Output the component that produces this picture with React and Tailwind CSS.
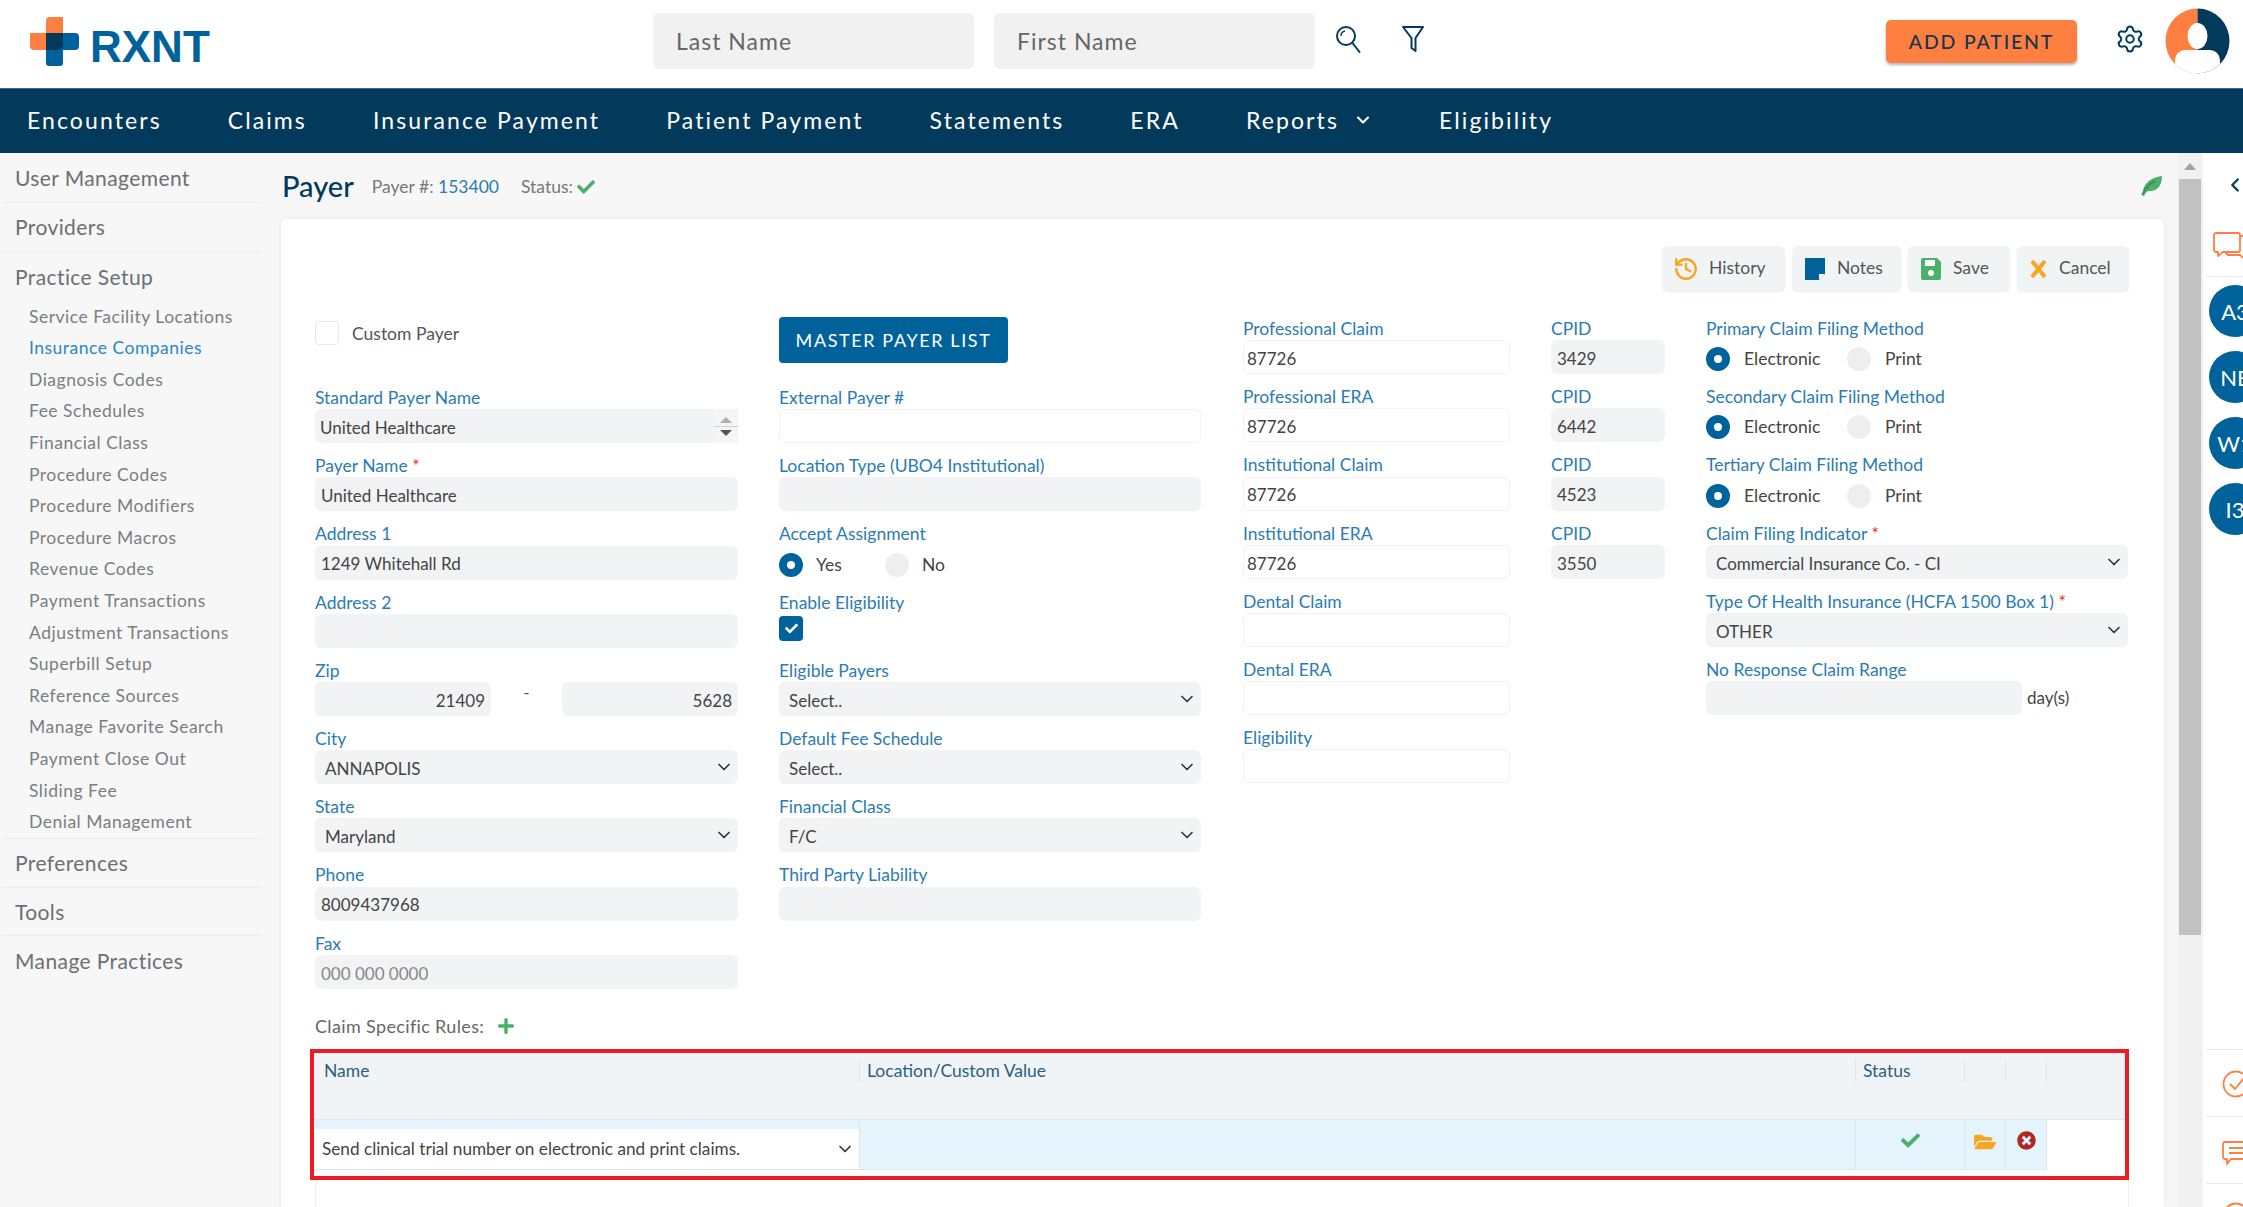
import { ChevronDown, ChevronLeft, History, Settings } from "lucide-react";
import { FaCheck, FaFolderOpen, FaPlus, FaTimesCircle } from "react-icons/fa";

const navItems = ["Encounters", "Claims", "Insurance Payment", "Patient Payment", "Statements", "ERA", "Reports", "Eligibility"];
const subItems = [
  "Service Facility Locations", "Insurance Companies", "Diagnosis Codes", "Fee Schedules", "Financial Class",
  "Procedure Codes", "Procedure Modifiers", "Procedure Macros", "Revenue Codes", "Payment Transactions",
  "Adjustment Transactions", "Superbill Setup", "Reference Sources", "Manage Favorite Search", "Payment Close Out",
  "Sliding Fee", "Denial Management",
];

const Field = ({ label, required, children }) => (
  <div className="h-[68.2px]">
    <div className="h-[23.25px] text-[17.5px] leading-[24px] text-[#2a7cb3] whitespace-nowrap">
      {label}
      {required && <span className="text-[#ed1c24]"> *</span>}
    </div>
    {children}
  </div>
);

const Input = ({ value, white, right, muted, className = "" }) => (
  <div className={`h-[34px] rounded-[6px] pt-[3px] flex items-center text-[17px] ${muted ? "text-[#888]" : "text-[#444]"} ${white ? "px-[3px] bg-white border border-[#f2f3f4]" : "px-[6px] bg-[#f1f3f4]"} ${right ? "justify-end" : ""} ${className}`}>
    {value}
  </div>
);

const Select = ({ value }) => (
  <div className="h-[34px] rounded-[6px] pl-[10px] pr-[4px] flex items-center justify-between text-[17px] text-[#444] bg-[#f1f3f4]">
    <span className="pt-[3px]">{value}</span>
    <ChevronDown size={20} className="text-[#333]" />
  </div>
);

const Radio = ({ on }) =>
  on ? (
    <span className="w-[24px] h-[24px] rounded-full border-[8px] border-[#00629b] bg-white" />
  ) : (
    <span className="w-[24px] h-[24px] rounded-full bg-[#eeeeee]" />
  );

const FilingMethod = ({ label }) => (
  <Field label={label}>
    <div className="flex items-center h-[34px] text-[17.5px] text-[#444] mt-[2px]">
      <Radio on />
      <span className="ml-[14px] w-[103px]">Electronic</span>
      <Radio />
      <span className="ml-[14px]">Print</span>
    </div>
  </Field>
);

const ToolButton = ({ icon, label, width }) => (
  <div className={`h-[45px] ${width} rounded-[6px] bg-[#f1f4f5] shadow-[0_1px_2px_rgba(0,0,0,0.08)] pl-[13px] flex items-center gap-[12px] text-[17.5px] text-[#555]`}>
    {icon}
    {label}
  </div>
);

const SideTop = ({ label, height = "h-[48.5px]", border = true }) => (
  <div className={`${height} mx-[2px] pl-[13px] flex items-center text-[21px] tracking-[0.4px] text-[#6b7075] ${border ? "border-b border-[#ececec]" : ""}`}>
    {label}
  </div>
);

const Logo = () => (
  <div className="flex items-end">
    <svg width="50" height="50" viewBox="0 0 50 50">
      <path d="M16 16V4a4 4 0 0 1 4-4h13v33H4a4 4 0 0 1-4-4V16z" fill="#ff7f41" />
      <path d="M16 16H45a4 4 0 0 1 4 4v9a4 4 0 0 1-4 4H33v13a3 3 0 0 1-3 3H19a3 3 0 0 1-3-3z" fill="#00629b" />
      <path d="M16 16H33V28a5 5 0 0 1-5 5H16z" fill="#033a5c" />
    </svg>
    <span className="ml-[10px] text-[44px] leading-[40px] font-bold text-[#00629b] font-['Liberation_Sans',sans-serif]">RXNT</span>
  </div>
);

const Avatar = () => (
  <svg width="65" height="66" viewBox="0 0 65 66">
    <defs>
      <clipPath id="av"><ellipse cx="32.5" cy="33" rx="32" ry="32.5" /></clipPath>
    </defs>
    <g clipPath="url(#av)">
      <rect width="32.5" height="66" fill="#ff7f41" />
      <rect x="32.5" width="32.5" height="66" fill="#033a5c" />
      <ellipse cx="32.5" cy="28" rx="10" ry="13" fill="#fff" />
      <path d="M10 66V52a10 10 0 0 1 10-10h25a10 10 0 0 1 10 10v14z" fill="#fff" />
    </g>
  </svg>
);

const App = () => {
  return (
    <div className="w-[2243px] h-[1207px] overflow-hidden flex flex-col bg-white font-['Lato',sans-serif] text-[#444]">
      <header className="h-[88px] shrink-0 flex items-start relative">
        <div className="w-[624px] pl-[30px] pt-[17px]"><Logo /></div>
        <div className="w-[321px] h-[56px] mt-[13px] ml-[29px] rounded-[6px] bg-[#f1f1f1] pl-[23px] flex items-center text-[23px] tracking-[1px] text-[#666]">Last Name</div>
        <div className="w-[321px] h-[56px] mt-[13px] ml-[20px] rounded-[6px] bg-[#f1f1f1] pl-[23px] flex items-center text-[23px] tracking-[1px] text-[#666]">First Name</div>
        <svg className="ml-[20px] mt-[25px]" width="26" height="28" viewBox="0 0 26 28" fill="none" stroke="#033a5c" strokeWidth="2">
          <circle cx="11" cy="11" r="9" />
          <path d="M6 11a5 5 0 0 1 4-5" strokeWidth="1.4" />
          <path d="M17.5 18l7 9" strokeLinecap="round" />
        </svg>
        <svg className="ml-[40px] mt-[25px]" width="24" height="28" viewBox="0 0 24 28" fill="none" stroke="#033a5c" strokeWidth="2" strokeLinejoin="round">
          <path d="M2 2h20l-7.5 11v13l-4-3V13z" />
        </svg>
        <div className="ml-[461px] mt-[20px] w-[191px] h-[43px] rounded-[5px] bg-[#ff7f41] shadow-[0_2px_3px_rgba(0,0,0,0.3)] flex items-center justify-center text-[19.5px] font-medium tracking-[1.8px] text-[#17344d]">ADD PATIENT</div>
        <Settings size={30} strokeWidth={1.6} className="ml-[38px] mt-[24px] text-[#033a5c]" />
        <div className="ml-[20px] mt-[8px]"><Avatar /></div>
      </header>

      <nav className="h-[65px] shrink-0 bg-[#033a5c] border-t border-[#3c6a85] border-b-[#8fb0c4] flex items-center pl-[27px] pb-[2px] gap-[66px] text-[23px] tracking-[2.1px] text-white">
        {navItems.map((n) => (
          <span key={n} className="flex items-center gap-[14px]">
            {n}
            {n === "Reports" && <ChevronDown size={20} strokeWidth={2.5} />}
          </span>
        ))}
      </nav>

      <div className="flex-1 flex min-h-0">
        <aside className="w-[263px] shrink-0 bg-[#f7f7f7]">
          <SideTop label="User Management" height="h-[50px]" />
          <SideTop label="Providers" height="h-[49px]" />
          <SideTop label="Practice Setup" height="h-[49px]" border={false} />
          <ul className="pl-[29px]">
            {subItems.map((s) => (
              <li key={s} className={`h-[31.6px] flex items-center text-[17.5px] tracking-[0.5px] ${s === "Insurance Companies" ? "text-[#2a86c8]" : "text-[#7a7e82]"}`}>{s}</li>
            ))}
          </ul>
          <div className="border-t border-[#ececec] mx-[2px]" />
          <SideTop label="Preferences" />
          <SideTop label="Tools" />
          <SideTop label="Manage Practices" border={false} />
        </aside>

        <main className="flex-1 min-w-0 bg-[#f7f7f7] flex flex-col pl-[18px] pr-[13px]">
          <div className="h-[66px] shrink-0 flex items-center pr-[1px]">
            <h1 className="text-[29px] font-medium text-[#033a5c] ml-[1px]">Payer</h1>
            <span className="ml-[18px] mt-[2px] text-[17.5px] text-[#777]">Payer #: <span className="text-[#2a7cb3]">153400</span></span>
            <span className="ml-[22px] mt-[2px] text-[17.5px] text-[#777] flex items-center gap-[4px]">Status: <FaCheck size={18} className="text-[#4caf6a]" /></span>
            <svg className="ml-auto" width="24" height="22" viewBox="0 0 24 22">
              <path d="M4 21C3 12 8 3 23 1c0 10-5 16-14 15-2 1-3 3-4 5z" fill="#4caf6a" />
              <path d="M3 20C6 13 10 9 16 6" stroke="#2f8f4f" strokeWidth="1.5" fill="none" />
            </svg>
          </div>

          <section className="flex-1 min-h-0 bg-white rounded-t-[6px] shadow-[0_0_4px_rgba(0,0,0,0.08)] pl-[34px] pr-[35px] pt-[27px] flex flex-col">
            <div className="flex justify-end gap-[7px]">
              <ToolButton width="w-[123px]" label="History" icon={<History size={26} strokeWidth={2.2} className="-ml-[2px] -mr-[2px] text-[#f5a623]" />} />
              <ToolButton width="w-[109px]" label="Notes" icon={
                <svg width="20" height="22" viewBox="0 0 20 22"><path d="M0 0h20v16l-6 6H0z" fill="#00629b" /><path d="M14 22v-6h6z" fill="#fff" /></svg>
              } />
              <ToolButton width="w-[102px]" label="Save" icon={
                <svg width="20" height="22" viewBox="0 0 20 22"><path d="M2 0h14l4 4v16a2 2 0 0 1-2 2H2a2 2 0 0 1-2-2V2a2 2 0 0 1 2-2z" fill="#4caf6a" /><rect x="4" y="2" width="10" height="6" fill="#fff" /><circle cx="10" cy="15" r="3" fill="#fff" /></svg>
              } />
              <ToolButton width="w-[112px]" label="Cancel" icon={
                <svg width="17" height="20" viewBox="0 0 17 20"><path d="M2 2l13 16M15 2L2 18" stroke="#f5a623" strokeWidth="4" /></svg>
              } />
            </div>

            <div className="mt-[26px] flex">
              <div className="w-[423px]">
                <div className="h-[69px] flex items-start pt-[4px]">
                  <span className="w-[24px] h-[24px] rounded-[4px] border border-[#e8e8e8] bg-white" />
                  <span className="ml-[13px] text-[17.5px] text-[#555]">Custom Payer</span>
                </div>
                <Field label="Standard Payer Name">
                  <div className="h-[34px] rounded-[6px] bg-[#f1f3f4] pl-[5px] flex items-center justify-between text-[17px]">
                    <span className="pt-[3px]">United Healthcare</span>
                    <div className="w-[25px] h-full flex flex-col items-center justify-center gap-[3px] bg-[#f5f5f5]">
                      <span className="w-0 h-0 border-x-[6px] border-x-transparent border-b-[6px] border-b-[#b0b0b0]" />
                      <span className="w-[24px] border-t border-[#d0d0d0]" />
                      <span className="w-0 h-0 border-x-[6px] border-x-transparent border-t-[6px] border-t-[#555]" />
                    </div>
                  </div>
                </Field>
                <Field label="Payer Name" required><Input value="United Healthcare" /></Field>
                <Field label="Address 1"><Input value="1249 Whitehall Rd" /></Field>
                <Field label="Address 2"><Input /></Field>
                <Field label="Zip">
                  <div className="flex items-start">
                    <Input value="21409" right className="w-[176px]" />
                    <span className="w-[71px] text-center leading-[20px]">-</span>
                    <Input value="5628" right className="w-[176px]" />
                  </div>
                </Field>
                <Field label="City"><Select value="ANNAPOLIS" /></Field>
                <Field label="State"><Select value="Maryland" /></Field>
                <Field label="Phone"><Input value="8009437968" /></Field>
                <Field label="Fax"><Input value="000 000 0000" muted /></Field>
              </div>

              <div className="w-[422px] ml-[41px]">
                <div className="h-[69px]">
                  <div className="w-[229px] h-[46px] rounded-[4px] bg-[#00629b] flex items-center justify-center text-[18px] tracking-[1.6px] text-white">MASTER PAYER LIST</div>
                </div>
                <Field label="External Payer #"><Input white /></Field>
                <Field label="Location Type (UBO4 Institutional)"><Input /></Field>
                <Field label="Accept Assignment">
                  <div className="flex items-center h-[34px] text-[17.5px] mt-[2px]">
                    <Radio on />
                    <span className="ml-[13px] w-[69px]">Yes</span>
                    <Radio />
                    <span className="ml-[13px]">No</span>
                  </div>
                </Field>
                <Field label="Enable Eligibility">
                  <div className="w-[24px] h-[25px] mt-[2px] rounded-[4px] bg-[#00629b] flex items-center justify-center">
                    <FaCheck size={13} className="text-white" />
                  </div>
                </Field>
                <Field label="Eligible Payers"><Select value="Select.." /></Field>
                <Field label="Default Fee Schedule"><Select value="Select.." /></Field>
                <Field label="Financial Class"><Select value="F/C" /></Field>
                <Field label="Third Party Liability"><Input /></Field>
              </div>

              <div className="w-[267px] ml-[42px]">
                <Field label="Professional Claim"><Input white value="87726" /></Field>
                <Field label="Professional ERA"><Input white value="87726" /></Field>
                <Field label="Institutional Claim"><Input white value="87726" /></Field>
                <Field label="Institutional ERA"><Input white value="87726" /></Field>
                <Field label="Dental Claim"><Input white /></Field>
                <Field label="Dental ERA"><Input white /></Field>
                <Field label="Eligibility"><Input white /></Field>
              </div>

              <div className="w-[114px] ml-[41px]">
                <Field label="CPID"><Input value="3429" /></Field>
                <Field label="CPID"><Input value="6442" /></Field>
                <Field label="CPID"><Input value="4523" /></Field>
                <Field label="CPID"><Input value="3550" /></Field>
              </div>

              <div className="w-[422px] ml-[41px]">
                <FilingMethod label="Primary Claim Filing Method" />
                <FilingMethod label="Secondary Claim Filing Method" />
                <FilingMethod label="Tertiary Claim Filing Method" />
                <Field label="Claim Filing Indicator" required><Select value="Commercial Insurance Co. - CI" /></Field>
                <Field label="Type Of Health Insurance (HCFA 1500 Box 1)" required><Select value="OTHER" /></Field>
                <Field label="No Response Claim Range">
                  <div className="flex items-center">
                    <Input className="w-[316px]" />
                    <span className="ml-[5px] text-[17px]">day(s)</span>
                  </div>
                </Field>
              </div>
            </div>

            <div className="mt-[15.5px] h-[22px] flex items-center text-[18px] tracking-[0.35px] text-[#666]">
              Claim Specific Rules:
              <FaPlus size={18} className="ml-[13px] text-[#4caf6a]" />
            </div>

            <div className="mt-[12px] -ml-[5px] h-[131px] shrink-0 border-4 border-[#ed1c24]">
              <div className="h-[67px] bg-[#f1f4f6] border-b border-[#e2e5e7] flex items-start pt-[6px] text-[17.5px] text-[#2b5f80]">
                <div className="w-[546px] h-[23px] pl-[10px] border-r border-[#e2e5e7] leading-[24px]">Name</div>
                <div className="w-[996px] h-[23px] pl-[7px] border-r border-[#e2e5e7] leading-[24px]">Location/Custom Value</div>
                <div className="w-[109px] h-[23px] pl-[7px] border-r border-[#e2e5e7] leading-[24px]">Status</div>
                <div className="w-[41px] h-[23px] border-r border-[#e2e5e7]" />
                <div className="w-[41px] h-[23px] border-r border-[#e2e5e7]" />
              </div>
              <div className="h-[50px] flex">
                <div className="w-[546px] pt-[9px] bg-[#e5f3fc] border-r border-b border-[#dfe3e6]">
                  <div className="h-[40px] bg-white pl-[8px] pr-[4px] flex items-center justify-between text-[17.2px] text-[#444]">
                    Send clinical trial number on electronic and print claims.
                    <ChevronDown size={20} className="text-[#333]" />
                  </div>
                </div>
                <div className="w-[996px] bg-[#e5f3fc] border-r border-b border-[#dfe3e6]" />
                <div className="w-[109px] bg-[#e5f3fc] border-r border-b border-[#dfe3e6] flex justify-center pt-[11px]">
                  <FaCheck size={19} className="text-[#4caf6a]" />
                </div>
                <div className="w-[41px] bg-[#e5f3fc] border-r border-b border-[#dfe3e6] flex justify-center pt-[11px]">
                  <FaFolderOpen size={22} className="text-[#f5a623]" />
                </div>
                <div className="w-[41px] bg-[#e5f3fc] border-r border-b border-[#dfe3e6] flex justify-center pt-[11px]">
                  <FaTimesCircle size={19} className="text-[#b02a25]" />
                </div>
              </div>
            </div>
            <div className="flex-1 border-x border-[#f0f0f0]" />
          </section>
        </main>

        <div className="w-[26px] shrink-0 bg-[#f1f1f1] flex flex-col items-center">
          <div className="h-[26px] flex items-center justify-center">
            <span className="w-0 h-0 border-x-[6px] border-x-transparent border-b-[7px] border-b-[#a3a3a3]" />
          </div>
          <div className="w-[22px] h-[756px] bg-[#c1c1c1]" />
        </div>

        <aside className="w-[40px] shrink-0 bg-white overflow-hidden flex flex-col items-start">
          <ChevronLeft size={22} strokeWidth={2.5} className="mt-[21px] ml-[21px] text-[#033a5c]" />
          <svg className="mt-[36px] ml-[10px] shrink-0" width="40" height="32" viewBox="0 0 40 32" fill="none" stroke="#ff7f41" strokeWidth="1.8" strokeLinejoin="round">
            <path d="M3 1h22a2 2 0 0 1 2 2v15a2 2 0 0 1-2 2H10l-5 4v-4H3a2 2 0 0 1-2-2V3a2 2 0 0 1 2-2z" />
            <path d="M27 4h9a2 2 0 0 1 2 2v15a2 2 0 0 1-2 2h-3v5l-6-5H15l-3-3" />
          </svg>
          <div className="mt-[12px] ml-[3px] w-full border-t border-[#e8e8e8]" />
          <div className="ml-[6px] mt-[8px] flex flex-col gap-[14px]">
            {["A3", "NE", "W1", "I3"].map((c) => (
              <div key={c} className="w-[52px] h-[52px] shrink-0 rounded-full bg-[#00629b] flex items-center justify-center text-[22px] text-white">{c}</div>
            ))}
          </div>
          <div className="mt-auto ml-[3px] w-full">
            <div className="h-[67px] border-t border-[#e8e8e8] pt-[20px] pl-[16px]">
              <svg width="28" height="28" viewBox="0 0 28 28" fill="none" stroke="#ff7f41" strokeWidth="1.8"><circle cx="14" cy="14" r="12.5" /><path d="M8 14l5 5 9-11" /></svg>
            </div>
            <div className="h-[67px] border-t border-[#e8e8e8] pt-[24px] pl-[16px]">
              <svg width="30" height="24" viewBox="0 0 30 24" fill="none" stroke="#ff7f41" strokeWidth="1.8" strokeLinejoin="round"><path d="M3 1h25v17H9l-4 5v-5H3a2 2 0 0 1-2-2V3a2 2 0 0 1 2-2z" /><path d="M7 7h20M7 12h20" /></svg>
            </div>
            <div className="h-[24px] border-t border-[#e8e8e8] pt-[18px] pl-[16px]">
              <svg width="28" height="28" viewBox="0 0 28 28" fill="none" stroke="#ff7f41" strokeWidth="1.8"><circle cx="14" cy="14" r="12.5" /></svg>
            </div>
          </div>
        </aside>
      </div>
    </div>
  );
};

export default App;
